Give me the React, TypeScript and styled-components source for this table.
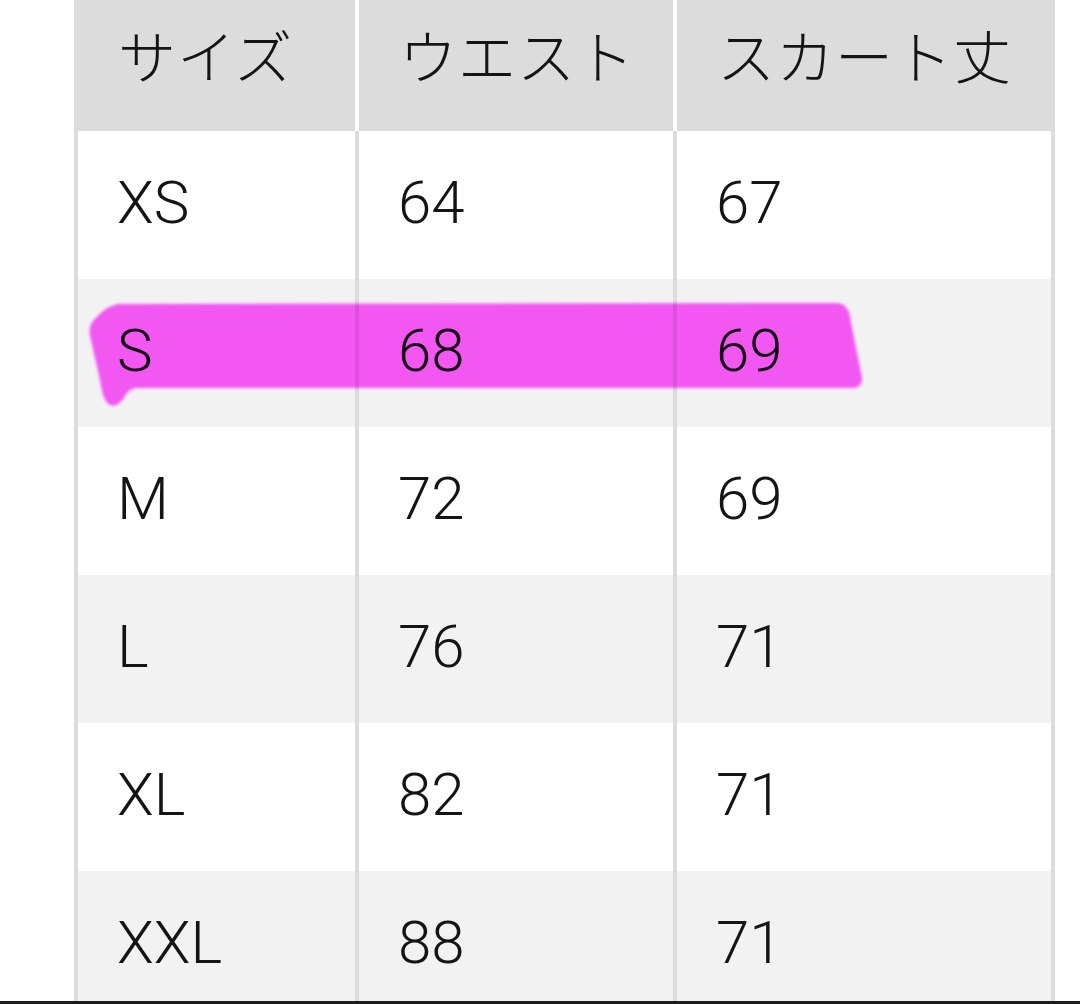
import React from "react";
import styled, { createGlobalStyle } from "styled-components";

const Global = createGlobalStyle`
  html, body { margin: 0; padding: 0; background: #ffffff; }
  body { font-family: Roboto, "Noto Sans CJK JP", sans-serif; }
`;

const Page = styled.div`
  position: relative;
  width: 1080px;
  height: 1004px;
  box-sizing: border-box;
  overflow: hidden;
  background: #ffffff;
  border-bottom: 3px solid #1c1c1c;
  padding-left: 74px;
`;

const Table = styled.div`
  width: 981px;
  display: flex;
  flex-direction: column;
`;

const HeaderRow = styled.div`
  display: grid;
  grid-template-columns: 281px 314px 378px;
  column-gap: 4px;
  height: 131px;
  background: #ffffff;
`;

const HeaderCell = styled.div<{ $first?: boolean }>`
  background: #dcdcdc;
  display: flex;
  align-items: center;
  padding-left: ${(p) => (p.$first ? 44 : 40)}px;
  padding-bottom: 24px;
  box-sizing: border-box;
  font-family: "Noto Sans CJK JP", sans-serif;
  font-size: 58px;
  font-weight: 300;
  color: #141414;
  letter-spacing: 1px;
  white-space: nowrap;
`;

const BodyRow = styled.div<{ $shade: boolean }>`
  display: grid;
  grid-template-columns: 277px 314px 374px;
  column-gap: 4px;
  padding: 0 4px;
  height: 148px;
  flex: none;
  background: #dcdcdc;
  & > div {
    background: ${(p) => (p.$shade ? "#f2f2f2" : "#ffffff")};
  }
`;

const Cell = styled.div`
  display: flex;
  align-items: center;
  padding-left: 39px;
  padding-bottom: 6px;
  box-sizing: border-box;
  font-family: Roboto, "Liberation Sans", sans-serif;
  font-size: 60px;
  font-weight: 300;
  color: #141414;
  white-space: nowrap;
`;

const Marker = styled.svg`
  position: absolute;
  left: 0;
  top: 0;
  width: 1080px;
  height: 1004px;
  pointer-events: none;
  mix-blend-mode: multiply;
`;

const rows = [
  ["XS", "64", "67"],
  ["S", "68", "69"],
  ["M", "72", "69"],
  ["L", "76", "71"],
  ["XL", "82", "71"],
  ["XXL", "88", "71"],
];

export default function App() {
  return (
    <>
      <Global />
      <Page>
        <Table>
          <HeaderRow>
            <HeaderCell $first>サイズ</HeaderCell>
            <HeaderCell>ウエスト</HeaderCell>
            <HeaderCell>スカート丈</HeaderCell>
          </HeaderRow>
          {rows.map((r, i) => (
            <BodyRow key={r[0]} $shade={i % 2 === 1}>
              <Cell>{r[0]}</Cell>
              <Cell>{r[1]}</Cell>
              <Cell>{r[2]}</Cell>
            </BodyRow>
          ))}
        </Table>
        <Marker viewBox="0 0 1080 1004">
          <defs>
            <filter id="soft" x="-5%" y="-20%" width="110%" height="140%">
              <feGaussianBlur stdDeviation="1.6" />
            </filter>
          </defs>
          <path
            filter="url(#soft)"
            fill="#ff5cff"
            d="M 118 304 L 838 303 Q 846 304 849 312 L 862 378 Q 863 388 852 388 L 136 388 Q 128 389 124 398 Q 117 408 110 405 Q 103 402 100 380 L 90 336 Q 88 324 96 318 Q 106 306 118 304 Z"
          />
        </Marker>
      </Page>
    </>
  );
}
